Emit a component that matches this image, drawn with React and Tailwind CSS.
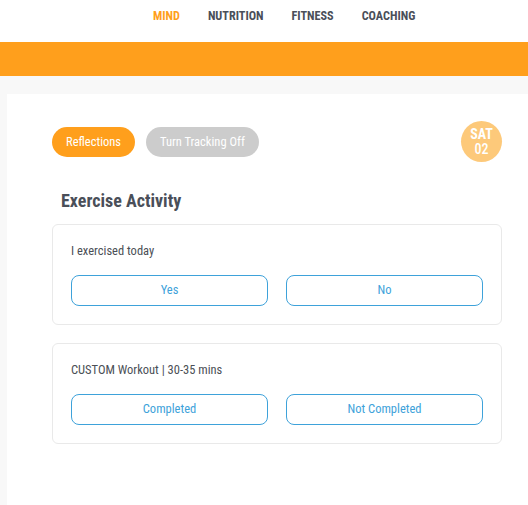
const nav = ["MIND", "NUTRITION", "FITNESS", "COACHING"]

function Card({ label, options }) {
  return (
    <div className="rounded-md border border-[#e9e9e9] bg-white px-[18px] pt-[18px] pb-[18px]">
      <p className="text-[12.5px] leading-[16px] text-[#4b4f56]">{label}</p>
      <div className="mt-[16px] flex gap-[18px]">
        {options.map((o) => (
          <button
            key={o}
            className="h-[31px] flex-1 rounded-lg border border-[#3ea2da] bg-white text-[12.5px] text-[#3ea2da]"
          >
            {o}
          </button>
        ))}
      </div>
    </div>
  )
}

export default function App() {
  return (
    <div className="min-h-[505px] bg-[#f8f8f8] font-['Roboto',sans-serif] font-stretch-[87.5%]">
      <div className="flex h-[42px] items-center gap-[28px] bg-white pl-[153px] pb-[10px]">
        {nav.map((n, i) => (
          <span
            key={n}
            className={
              i === 0
                ? "text-[12.2px] font-bold text-[#ff9f1c]"
                : "text-[12.2px] font-bold text-[#4a4f59]"
            }
          >
            {n}
          </span>
        ))}
      </div>
      <div className="h-[34px] bg-[#ff9f1c]" />
      <div className="pt-[18px] pl-[7px]">
        <div className="min-h-[411px] bg-white pl-[45px] pr-[26px] pt-[27px]">
          <div className="flex items-start justify-between">
            <div className="mt-[6px] flex gap-[11px]">
              <button className="h-[30px] rounded-full bg-[#ff9f1c] px-[14px] text-[12.5px] text-white">
                Reflections
              </button>
              <button className="h-[30px] rounded-full bg-[#cccccc] px-[14px] text-[12.5px] text-white">
                Turn Tracking Off
              </button>
            </div>
            <div className="flex h-[41px] w-[41px] flex-col items-center justify-center rounded-full bg-[#fdc97a] text-[14px] font-bold leading-[15px] text-white">
              <span>SAT</span>
              <span className="font-medium">02</span>
            </div>
          </div>
          <h2 className="mt-[28px] pl-[9px] text-[18px] font-bold leading-[22px] text-[#4a4f59]">
            Exercise Activity
          </h2>
          <div className="mt-[12px] flex flex-col gap-[18px]">
            <Card label="I exercised today" options={["Yes", "No"]} />
            <Card
              label="CUSTOM Workout | 30-35 mins"
              options={["Completed", "Not Completed"]}
            />
          </div>
        </div>
      </div>
    </div>
  )
}
